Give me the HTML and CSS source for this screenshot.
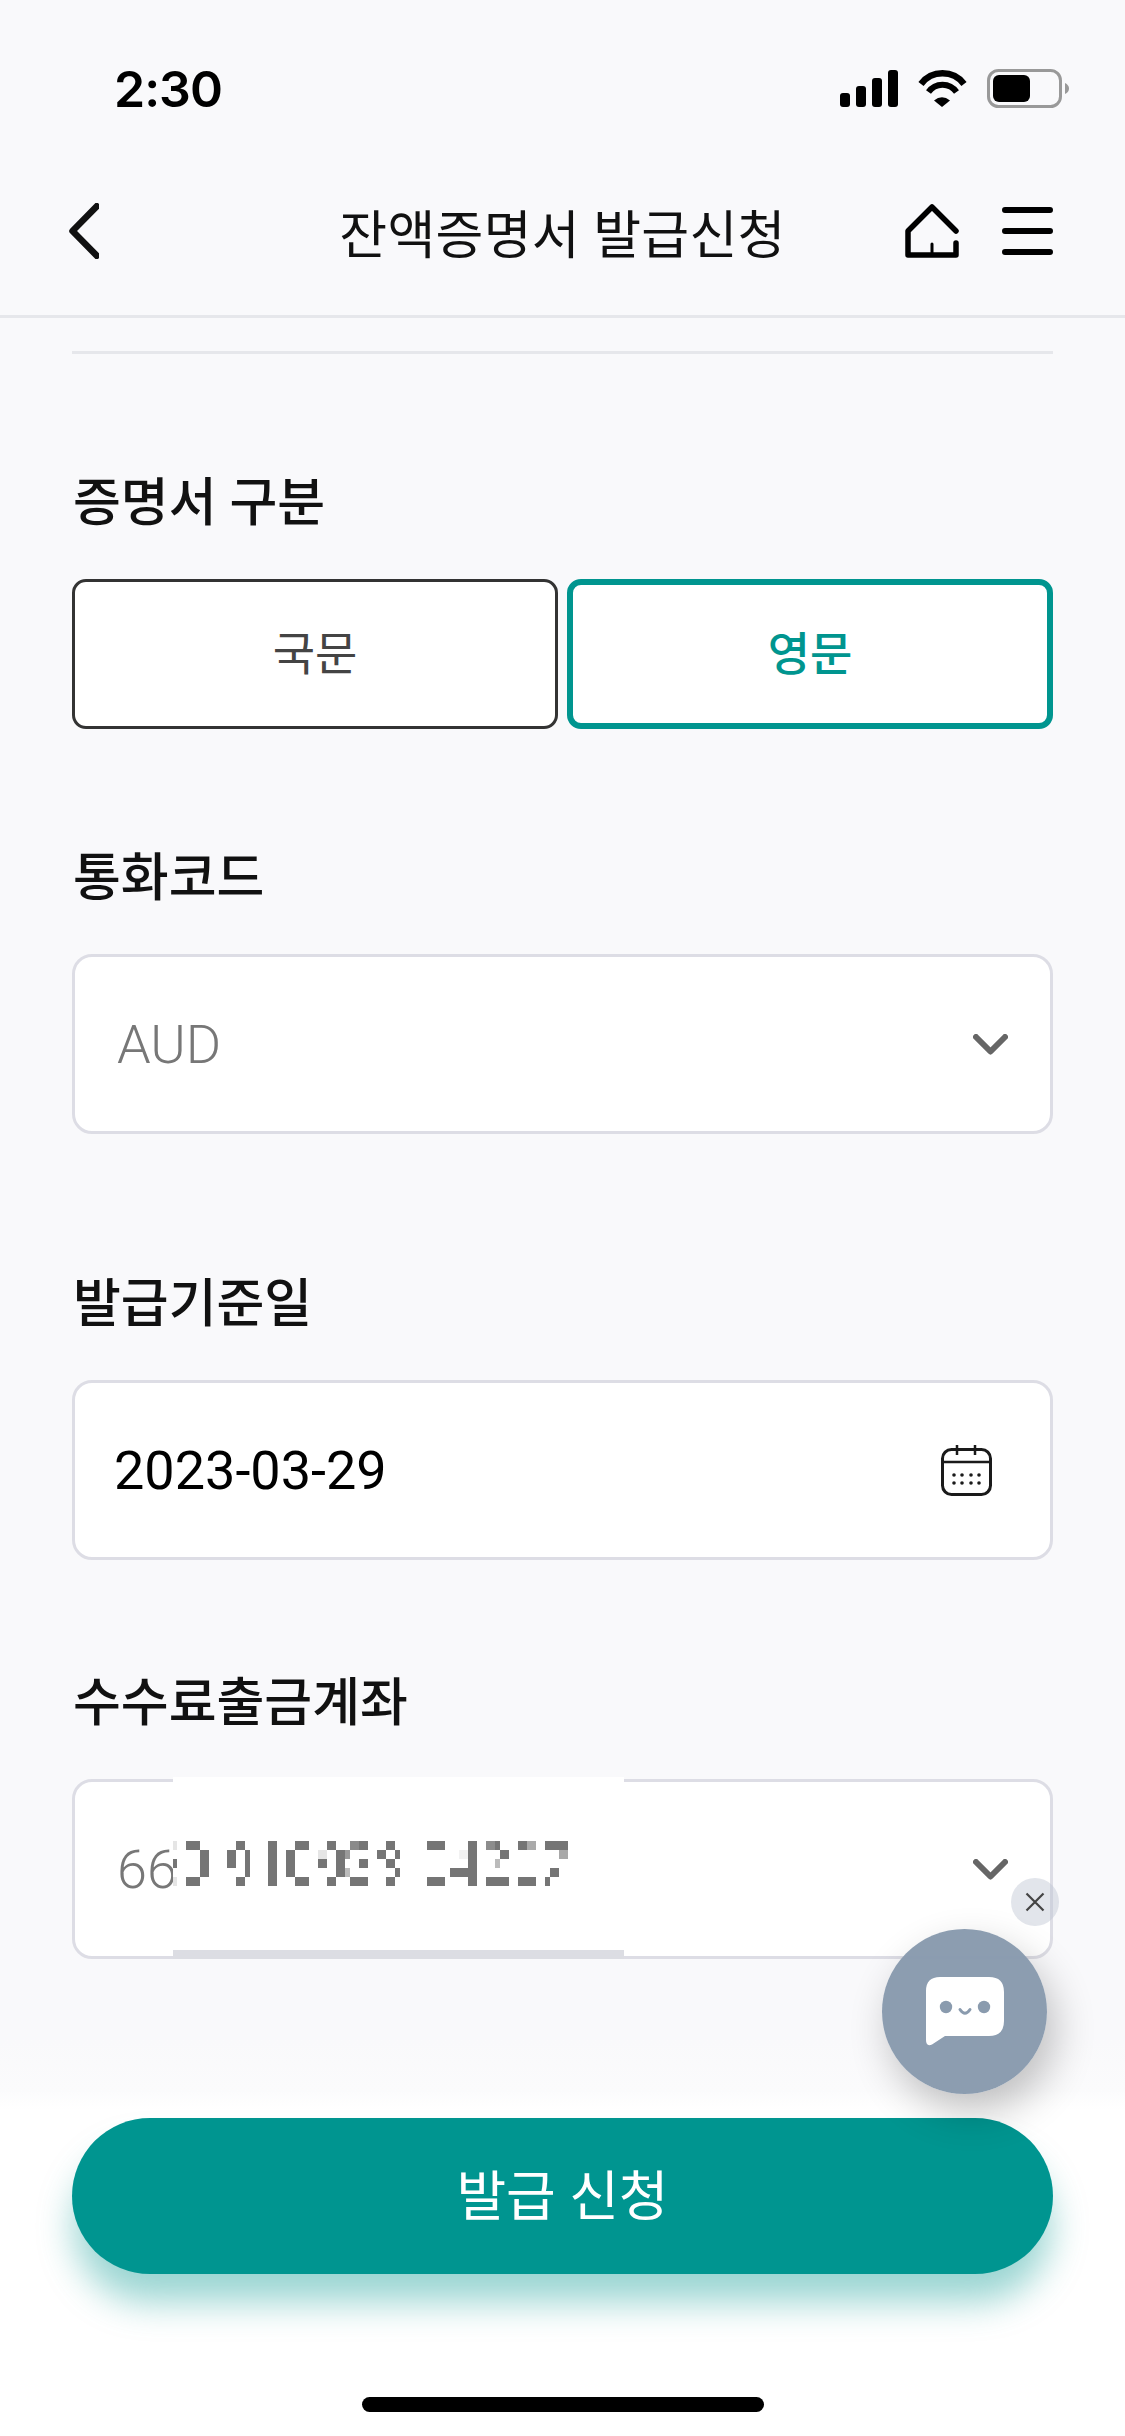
FILE: index.html
```html
<!DOCTYPE html>
<html lang="ko">

<head>
    <meta charset="UTF-8">
    <meta name="viewport" content="width=device-width, initial-scale=1.0">
    <title>잔액증명서 발급신청</title>
    <link rel="stylesheet" href="styles.css">
</head>

<body>
    <div class="app">
        <div class="status-bar">
            <span class="time">2:30</span>
            <div class="status-icons">
                <svg width="58" height="37" viewBox="0 0 58 37">
                    <rect x="0" y="23" width="10" height="14" rx="3" fill="#000" />
                    <rect x="16" y="16" width="10" height="21" rx="3" fill="#000" />
                    <rect x="32" y="8" width="10" height="29" rx="3" fill="#000" />
                    <rect x="48" y="0" width="10" height="37" rx="3" fill="#000" />
                </svg>
                <svg width="51" height="37" viewBox="0 0 51 37">
                    <path d="M4 14 A27 27 0 0 1 47 14" fill="none" stroke="#000" stroke-width="6.5" />
                    <path d="M11.5 22 A17 17 0 0 1 39.5 22" fill="none" stroke="#000" stroke-width="6" />
                    <path d="M17 30.5 Q25 24 33 30.5 L25 37 Z" fill="#000" />
                </svg>
                <svg width="82" height="39" viewBox="0 0 82 39">
                    <rect x="1.5" y="1.5" width="72" height="36" rx="10" fill="none" stroke="#999" stroke-width="3" />
                    <rect x="6" y="6" width="37" height="27" rx="6" fill="#000" />
                    <path d="M78 14 Q82 16 82 19.5 Q82 23 78 25 Z" fill="#999" />
                </svg>
            </div>
        </div>

        <header class="top-nav">
            <svg class="back-icon" width="30" height="56" viewBox="0 0 30 56">
                <path d="M30 1 L3.5 28 L30 55" fill="none" stroke="#111" stroke-width="6.5" stroke-linejoin="round" />
            </svg>
            <h1>잔액증명서 발급신청</h1>
            <div class="nav-actions">
                <svg width="54" height="54" viewBox="0 0 54 54">
                    <path d="M51 27 L27 3 L3 27 V51 H51 V39" fill="none" stroke="#000" stroke-width="5.5" stroke-linecap="round" stroke-linejoin="round" />
                    <path d="M27 40 V51" fill="none" stroke="#000" stroke-width="3" stroke-linecap="round" />
                </svg>
                <svg width="51" height="48" viewBox="0 0 51 48">
                    <path d="M3 3 H48 M3 24 H48 M3 45 H48" fill="none" stroke="#000" stroke-width="6" stroke-linecap="round" />
                </svg>
            </div>
        </header>

        <main class="content">
            <div class="divider"></div>

            <section class="field type-field">
                <h2>증명서 구분</h2>
                <div class="toggle">
                    <button class="toggle-btn">국문</button>
                    <button class="toggle-btn active">영문</button>
                </div>
            </section>

            <section class="field currency-field">
                <h2>통화코드</h2>
                <div class="input-box">
                    <span class="muted">AUD</span>
                    <svg class="chevron" width="35" height="21" viewBox="0 0 35 21">
                        <path d="M3 3 L17.5 17.5 L32 3" fill="none" stroke="#666" stroke-width="6" stroke-linecap="round" stroke-linejoin="round" />
                    </svg>
                </div>
            </section>

            <section class="field date-field">
                <h2>발급기준일</h2>
                <div class="input-box">
                    <span>2023-03-29</span>
                    <svg class="calendar" width="51" height="51" viewBox="0 0 51 51">
                        <rect x="1.5" y="4.5" width="48" height="45" rx="9" fill="none" stroke="#1a1a1a" stroke-width="3" />
                        <path d="M1.5 17 H49.5 M16 0 V10 M34 0 V10" fill="none" stroke="#1a1a1a" stroke-width="2.5" />
                        <g fill="#1a1a1a">
                            <circle cx="13" cy="30" r="1.8" />
                            <circle cx="21" cy="30" r="1.8" />
                            <circle cx="30" cy="30" r="1.8" />
                            <circle cx="38" cy="30" r="1.8" />
                            <circle cx="13" cy="38" r="1.8" />
                            <circle cx="21" cy="38" r="1.8" />
                            <circle cx="30" cy="38" r="1.8" />
                            <circle cx="38" cy="38" r="1.8" />
                        </g>
                    </svg>
                </div>
            </section>

            <section class="field account-field">
                <h2>수수료출금계좌</h2>
                <div class="input-box">
                    <span class="muted">66</span>
                    <svg class="chevron" width="35" height="21" viewBox="0 0 35 21">
                        <path d="M3 3 L17.5 17.5 L32 3" fill="none" stroke="#666" stroke-width="6" stroke-linecap="round" stroke-linejoin="round" />
                    </svg>
                    <div class="mask">
                        <!-- pixelated account number -->
                        <svg class="mask-pixels" width="400" height="45" viewBox="0 0 400 45" fill="#757575">
                            <rect x="0" y="0" width="4" height="9" fill="#e5e5e5" />
                            <rect x="0" y="18" width="4" height="9" />
                            <rect x="0" y="36" width="4" height="9" fill="#e5e5e5" />
                            <rect x="13" y="0" width="14" height="9" />
                            <rect x="27" y="9" width="9" height="27" />
                            <rect x="13" y="36" width="14" height="9" />
                            <rect x="63" y="0" width="9" height="9" />
                            <rect x="54" y="9" width="9" height="18" />
                            <rect x="72" y="9" width="5" height="27" />
                            <rect x="63" y="36" width="9" height="9" />
                            <rect x="95" y="0" width="9" height="45" />
                            <rect x="122" y="0" width="14" height="9" />
                            <rect x="113" y="9" width="9" height="27" />
                            <rect x="122" y="36" width="14" height="9" />
                            <rect x="154" y="0" width="9" height="9" />
                            <rect x="145" y="9" width="9" height="9" fill="#e5e5e5" />
                            <rect x="145" y="18" width="9" height="9" />
                            <rect x="154" y="36" width="9" height="9" />
                            <rect x="163" y="9" width="9" height="27" />
                            <rect x="177" y="0" width="9" height="9" fill="#8a8a8a" />
                            <rect x="186" y="0" width="9" height="9" />
                            <rect x="172" y="9" width="5" height="9" fill="#999" />
                            <rect x="186" y="18" width="9" height="9" />
                            <rect x="172" y="27" width="5" height="9" fill="#bbb" />
                            <rect x="177" y="36" width="18" height="9" />
                            <rect x="204" y="9" width="9" height="9" />
                            <rect x="213" y="0" width="9" height="9" />
                            <rect x="213" y="18" width="9" height="9" />
                            <rect x="213" y="36" width="9" height="9" />
                            <rect x="222" y="9" width="5" height="9" />
                            <rect x="222" y="27" width="5" height="9" />
                            <rect x="254" y="0" width="18" height="9" />
                            <rect x="254" y="36" width="18" height="9" />
                            <rect x="286" y="9" width="9" height="9" fill="#f2f2f2" />
                            <rect x="295" y="0" width="9" height="45" />
                            <rect x="277" y="27" width="18" height="9" />
                            <rect x="313" y="0" width="9" height="9" fill="#8c8c8c" />
                            <rect x="322" y="0" width="5" height="9" />
                            <rect x="327" y="9" width="9" height="9" />
                            <rect x="322" y="18" width="5" height="9" fill="#bbb" />
                            <rect x="313" y="36" width="23" height="9" />
                            <rect x="345" y="0" width="9" height="9" />
                            <rect x="354" y="0" width="9" height="9" fill="#aaa" />
                            <rect x="345" y="36" width="18" height="9" />
                            <rect x="372" y="0" width="23" height="9" />
                            <rect x="386" y="9" width="9" height="9" fill="#a8a8a8" />
                            <rect x="377" y="27" width="9" height="9" />
                            <rect x="372" y="36" width="5" height="9" />
                        </svg>
                    </div>
                </div>
            </section>
        </main>

        <div class="footer">
            <button class="submit-btn">발급 신청</button>
            <div class="home-indicator"></div>
        </div>

        <div class="chat-widget">
            <span class="chat-close">
                <svg width="20" height="20" viewBox="0 0 20 20">
                    <path d="M1.5 1.5 L18.5 18.5 M18.5 1.5 L1.5 18.5" fill="none" stroke="#444" stroke-width="2.2" />
                </svg>
            </span>
            <svg width="78" height="69" viewBox="0 0 78 69">
                <path d="M14 0 H63 Q78 0 78 15 V44 Q78 59 63 59 H19 L6 67.5 Q0 70 0 63 V14 Q0 0 14 0 Z" fill="#fff" />
                <circle cx="20" cy="30" r="6.2" fill="#8a9bae" />
                <circle cx="58" cy="30" r="6.2" fill="#8a9bae" />
                <path d="M34 32.5 Q39 40 44 32.5" fill="none" stroke="#8a9bae" stroke-width="3" stroke-linecap="round" />
            </svg>
        </div>
    </div>
</body>

</html>
```

FILE: styles.css
```css
* {
    box-sizing: border-box;
}

body {
    margin: 0;
    background-color: #f9f9fb;
    font-family: Roboto, "Noto Sans CJK KR", sans-serif;
    color: #000;
}

.app {
    width: 1125px;
    height: 2436px;
    display: flex;
    flex-direction: column;
    position: relative;
    overflow: hidden;
}

.status-bar {
    height: 150px;
    padding: 27px 56px 0 114px;
    display: flex;
    justify-content: space-between;
    align-items: center;
}

.time {
    font-family: Inter, sans-serif;
    font-size: 50px;
    font-weight: 600;
    letter-spacing: -1px;
}

.status-icons {
    display: flex;
    align-items: center;
    gap: 19px;
}

.top-nav {
    height: 168px;
    padding: 0 72px 3px 69px;
    display: grid;
    grid-template-columns: 1fr auto 1fr;
    align-items: center;
    border-bottom: 3px solid #e6e7eb;
}

.top-nav h1 {
    margin: 0;
    padding-left: 3px;
    font-size: 52px;
    font-weight: 400;
    letter-spacing: 0.3px;
    color: #111;
}

.nav-actions {
    display: flex;
    align-items: center;
    justify-content: flex-end;
    gap: 43px;
}

.content {
    flex: 1;
    padding: 33px 72px 0;
}

.divider {
    height: 3px;
    background: #e6e7eb;
}

.field h2 {
    margin: 0 0 37px;
    padding-left: 1px;
    font-size: 52px;
    font-weight: 500;
    line-height: 76px;
    color: #111;
}

.type-field {
    margin-top: 112px;
}

.currency-field {
    margin-top: 112px;
}

.date-field {
    margin-top: 133px;
}

.account-field {
    margin-top: 106px;
}

.toggle {
    display: grid;
    grid-template-columns: 1fr 1fr;
    gap: 9px;
}

.toggle-btn {
    height: 150px;
    padding: 0 0 8px;
    font-family: inherit;
    font-size: 46px;
    color: #444;
    background: #fff;
    border: 3px solid #333;
    border-radius: 14px;
}

.toggle-btn.active {
    color: #00958f;
    font-weight: 500;
    border: 6px solid #00958f;
}

.input-box {
    height: 180px;
    padding: 0 42px 0 39px;
    display: flex;
    align-items: center;
    justify-content: space-between;
    position: relative;
    background: #fff;
    border: 3px solid #dddde5;
    border-radius: 20px;
    font-size: 54px;
}

.muted {
    margin-left: 3px;
    color: #777;
    font-weight: 300;
}

.calendar {
    margin-right: 16px;
}

.mask {
    position: absolute;
    left: 98px;
    top: -5px;
    width: 451px;
    height: 182px;
    background: #fff;
    border-bottom: 9px solid #dcdde3;
}

.mask-pixels {
    position: absolute;
    left: 0;
    top: 64px;
}

.footer {
    height: 396px;
    padding-top: 78px;
    display: flex;
    flex-direction: column;
    align-items: center;
    gap: 123px;
    background: linear-gradient(#f9f9fb, #fbfbfc 50px, #fff 70px);
}

.submit-btn {
    width: 981px;
    height: 156px;
    flex-shrink: 0;
    padding: 0 0 8px;
    font-family: inherit;
    font-size: 54px;
    color: #fff;
    background: #009590;
    border: none;
    border-radius: 78px;
    box-shadow: 0 30px 36px -2px rgba(0, 149, 143, 0.4);
}

.home-indicator {
    width: 402px;
    height: 15px;
    flex-shrink: 0;
    background: #000;
    border-radius: 8px;
}

.chat-widget {
    position: absolute;
    left: 882px;
    top: 1929px;
    width: 165px;
    height: 165px;
    display: flex;
    align-items: center;
    justify-content: center;
    background: rgba(136, 154, 173, 0.97);
    border-radius: 50%;
    box-shadow: 8px 18px 40px rgba(0, 0, 0, 0.24);
}

.chat-close {
    position: absolute;
    left: 129px;
    top: -51px;
    width: 48px;
    height: 48px;
    display: flex;
    align-items: center;
    justify-content: center;
    background: rgba(190, 198, 210, 0.45);
    border-radius: 50%;
}
```
